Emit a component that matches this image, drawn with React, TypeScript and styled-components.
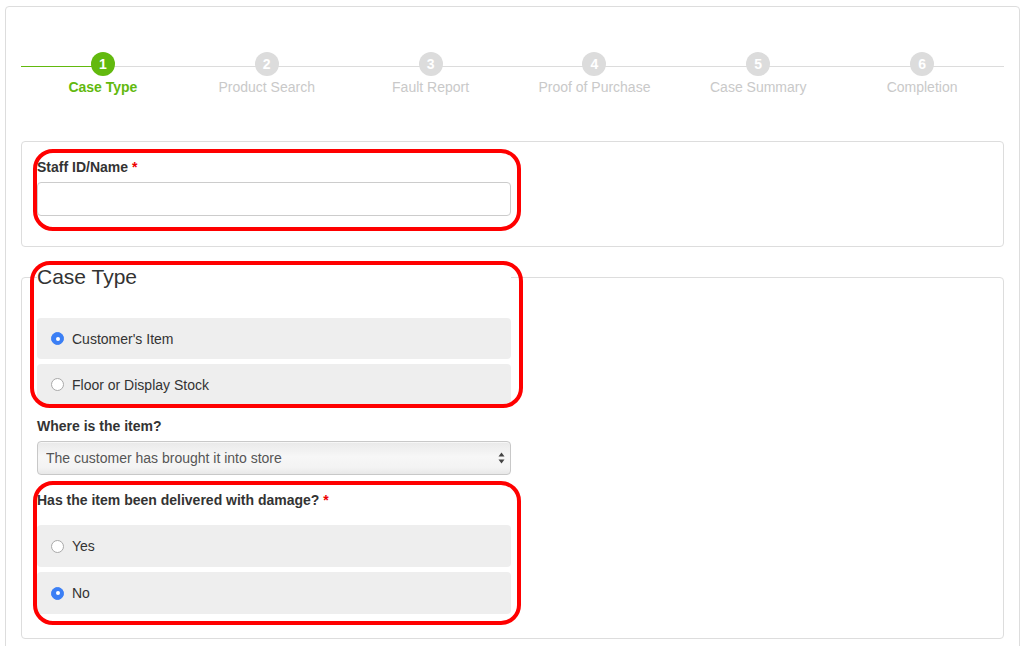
import React from "react";
import styled, { createGlobalStyle } from "styled-components";

const GlobalStyle = createGlobalStyle`
  html, body { margin: 0; padding: 0; overflow: hidden; background: #fff; }
  body {
    font-family: "Liberation Sans", Arial, Helvetica, sans-serif;
    font-size: 14px;
    line-height: 20px;
    color: #333;
  }
  * { box-sizing: border-box; }
`;

const GREEN = "#62b90e";

const Page = styled.div`
  margin: 6px 3px 0 5px;
  border: 1px solid #ddd;
  border-radius: 4px;
  padding: 0 15px 20px;
  min-height: 700px;
`;

const Stepper = styled.ol`
  list-style: none;
  margin: 45px 0 44px;
  padding: 0;
  display: grid;
  grid-template-columns: repeat(6, 1fr);
  background-image: linear-gradient(
    to right,
    ${GREEN} 0,
    ${GREEN} calc(100% / 12),
    #dcdcdc calc(100% / 12),
    #dcdcdc 100%
  );
  background-repeat: no-repeat;
  background-size: 100% 1px;
  background-position: 0 14px;
`;

const Step = styled.li`
  display: flex;
  flex-direction: column;
  align-items: center;
`;

const StepDot = styled.span<{ $active?: boolean }>`
  width: 24px;
  height: 24px;
  border-radius: 50%;
  background: ${(p) => (p.$active ? GREEN : "#dcdcdc")};
  color: #fff;
  font-weight: bold;
  font-size: 14px;
  line-height: 24px;
  text-align: center;
`;

const StepLabel = styled.span<{ $active?: boolean }>`
  margin-top: 1px;
  font-size: 14px;
  line-height: 20px;
  font-weight: ${(p) => (p.$active ? "bold" : "normal")};
  color: ${(p) => (p.$active ? GREEN : "#c9c9c9")};
  white-space: nowrap;
`;

const Card = styled.section`
  border: 1px solid #ddd;
  border-radius: 4px;
  padding: 15px 15px 15px;
`;

const FieldCard = styled.section`
  margin-top: 30px;
  border: 1px solid #ddd;
  border-radius: 4px;
  padding: 0 15px 24px;
`;

const Group = styled.div<{ $mb?: number }>`
  position: relative;
  width: 474px;
  margin-bottom: ${(p) => p.$mb ?? 0}px;
`;

const LegendGroup = styled(Group)`
  margin-top: -16px;
`;

const Highlight = styled.span<{ $t: number; $r: number; $b: number; $l: number }>`
  position: absolute;
  top: ${(p) => p.$t}px;
  right: ${(p) => p.$r}px;
  bottom: ${(p) => p.$b}px;
  left: ${(p) => p.$l}px;
  border: 4px solid #ff0000;
  border-radius: 20px;
  pointer-events: none;
`;

const Legend = styled.h2`
  margin: 0;
  background: #fff;
  font-size: 21px;
  font-weight: normal;
  line-height: 30px;
  color: #333;
`;

const Label = styled.label`
  display: block;
  font-weight: bold;
  font-size: 14px;
  line-height: 20px;
  margin-bottom: 5px;
`;

const Required = styled.span`
  color: #e00;
`;

const TextInput = styled.input`
  display: block;
  width: 100%;
  height: 34px;
  border: 1px solid #ccc;
  border-radius: 4px;
  padding: 6px 12px;
  font: inherit;
  outline: none;
`;

const OptionList = styled.div<{ $mt: number; $h: number }>`
  display: flex;
  flex-direction: column;
  gap: 5px;
  margin-top: ${(p) => p.$mt}px;
  & > label { height: ${(p) => p.$h}px; }
`;

const Option = styled.label`
  display: flex;
  align-items: center;
  gap: 8px;
  height: 41px;
  padding: 0 14px 0 14px;
  background: #eee;
  border-radius: 4px;
  font-size: 14px;
  color: #333;
`;

const RadioMark = styled.span<{ $checked?: boolean }>`
  flex: none;
  width: 13px;
  height: 13px;
  border-radius: 50%;
  box-sizing: border-box;
  background: ${(p) => (p.$checked ? "#3b7ff5" : "#fff")};
  border: 1px solid ${(p) => (p.$checked ? "#3b7ff5" : "#a9a9a9")};
  display: flex;
  align-items: center;
  justify-content: center;
  &::after {
    content: "";
    width: 4px;
    height: 4px;
    border-radius: 50%;
    background: #fff;
    display: ${(p) => (p.$checked ? "block" : "none")};
  }
`;

const SelectWrap = styled.div`
  position: relative;
`;

const Select = styled.select`
  display: block;
  width: 100%;
  height: 34px;
  appearance: none;
  -webkit-appearance: none;
  border: 1px solid #c8c8c8;
  border-radius: 4px;
  padding: 0 24px 0 8px;
  font: inherit;
  font-size: 14px;
  color: #555;
  background: linear-gradient(to bottom, #e9e9e9 0%, #f7f7f7 45%, #f3f3f3 80%, #e8e8e8 100%);
  box-shadow: inset 0 1px 0 rgba(255, 255, 255, 0.6);
`;

const SelectArrows = styled.svg`
  position: absolute;
  right: 6px;
  top: 11px;
  pointer-events: none;
`;

const RadioOption: React.FC<{ checked?: boolean; children: React.ReactNode }> = ({ checked, children }) => (
  <Option>
    <RadioMark $checked={checked} />
    {children}
  </Option>
);

const steps = ["Case Type", "Product Search", "Fault Report", "Proof of Purchase", "Case Summary", "Completion"];

export default function App() {
  return (
    <>
      <GlobalStyle />
      <Page>
        <Stepper>
          {steps.map((s, i) => (
            <Step key={s}>
              <StepDot $active={i === 0}>{i + 1}</StepDot>
              <StepLabel $active={i === 0}>{s}</StepLabel>
            </Step>
          ))}
        </Stepper>

        <Card>
          <Group $mb={15}>
            <Label>
              Staff ID/Name <Required>*</Required>
            </Label>
            <TextInput type="text" />
            <Highlight $t={-8} $r={-10} $b={-15} $l={-4} />
          </Group>
        </Card>

        <FieldCard>
          <LegendGroup $mb={11}>
            <Legend>Case Type</Legend>
            <OptionList $mt={26} $h={41}>
              <RadioOption checked>Customer's Item</RadioOption>
              <RadioOption>Floor or Display Stock</RadioOption>
            </OptionList>
            <Highlight $t={-1} $r={-12} $b={-3} $l={-7} />
          </LegendGroup>

          <Group $mb={15}>
            <Label>Where is the item?</Label>
            <SelectWrap>
              <Select defaultValue="store">
                <option value="store">The customer has brought it into store</option>
              </Select>
              <SelectArrows width="7" height="12" viewBox="0 0 7 12">
                <path d="M3.5 0.5 L6.5 4.5 L0.5 4.5 Z" fill="#444" />
                <path d="M3.5 11.5 L6.5 7.5 L0.5 7.5 Z" fill="#444" />
              </SelectArrows>
            </SelectWrap>
          </Group>

          <Group>
            <Label>
              Has the item been delivered with damage? <Required>*</Required>
            </Label>
            <OptionList $mt={15} $h={42}>
              <RadioOption>Yes</RadioOption>
              <RadioOption checked>No</RadioOption>
            </OptionList>
            <Highlight $t={-9} $r={-10} $b={-11} $l={-4} />
          </Group>
        </FieldCard>
      </Page>
    </>
  );
}
